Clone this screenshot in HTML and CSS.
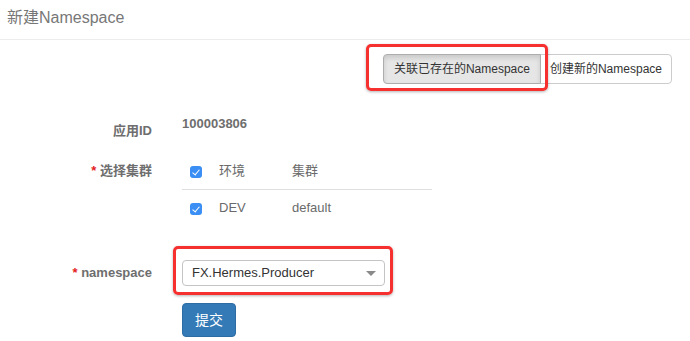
FILE: index.html
```html
<!DOCTYPE html>
<html lang="zh-CN">
<head>
<meta charset="utf-8">
<title>新建Namespace</title>
<link rel="stylesheet" href="styles.css">
</head>
<body>
<header class="page-header">新建Namespace</header>

<div class="toolbar">
  <div class="btn-group">
    <button class="btn btn-active">关联已存在的Namespace</button>
    <button class="btn">创建新的Namespace</button>
  </div>
  <span class="highlight highlight-toolbar"></span>
</div>

<form class="form">
  <div class="form-row row-app">
    <label class="control-label">应用ID</label>
    <div class="field"><p class="static-value">100003806</p></div>
  </div>

  <div class="form-row row-cluster">
    <label class="control-label"><span class="req">*</span> 选择集群</label>
    <div class="field">
      <table class="cluster-table">
        <thead>
          <tr>
            <th class="col-check"><span class="checkbox"></span></th>
            <th class="col-env">环境</th>
            <th class="col-cluster">集群</th>
          </tr>
        </thead>
        <tbody>
          <tr>
            <td class="col-check"><span class="checkbox"></span></td>
            <td class="col-env">DEV</td>
            <td class="col-cluster">default</td>
          </tr>
        </tbody>
      </table>
    </div>
  </div>

  <div class="form-row row-namespace">
    <label class="control-label"><span class="req">*</span> namespace</label>
    <div class="field field-select">
      <div class="select">FX.Hermes.Producer<span class="caret"></span></div>
      <span class="highlight highlight-select"></span>
    </div>
  </div>

  <div class="form-row row-submit">
    <div class="control-label"></div>
    <div class="field"><button type="button" class="btn-primary">提交</button></div>
  </div>
</form>
</body>
</html>
```

FILE: styles.css
```css
* { box-sizing: border-box; }

html, body {
  margin: 0;
  padding: 0;
  background: #fff;
}

body {
  font-family: "Liberation Sans", "Noto Sans CJK SC", sans-serif;
  color: #333;
  width: 690px;
  height: 341px;
  overflow: hidden;
}

.page-header {
  height: 40px;
  line-height: 36px;
  padding-left: 7px;
  font-size: 16px;
  color: #777;
  border-bottom: 1px solid #ececec;
}

.toolbar {
  position: relative;
  display: flex;
  justify-content: flex-end;
  padding-right: 18px;
  margin-top: 14px;
}

.btn-group {
  display: flex;
}

.btn {
  font-family: inherit;
  font-size: 12px;
  line-height: 18px;
  height: 30px;
  padding: 5px 9px;
  color: #333;
  background: #fff;
  border: 1px solid #ccc;
  border-radius: 0 4px 4px 0;
  margin-left: -1px;
}

.btn-active {
  padding: 5px 10px;
  background: #e6e6e6;
  border-color: #adadad;
  border-radius: 4px 0 0 4px;
  box-shadow: inset 0 3px 5px rgba(0, 0, 0, 0.125);
  margin-left: 0;
  position: relative;
  z-index: 1;
}

.highlight {
  position: absolute;
  border: 3px solid #f5302e;
  border-radius: 5px;
  box-shadow: 0 1px 3px rgba(0, 0, 0, 0.3);
  pointer-events: none;
}

.highlight-toolbar {
  left: 366px;
  top: -10px;
  width: 182px;
  height: 47px;
}

.form {
  margin-top: 30px;
}

.form-row {
  display: flex;
}

.control-label {
  width: 152px;
  flex: none;
  text-align: right;
  font-size: 13px;
  font-weight: bold;
  line-height: 20px;
  color: #6e6e6e;
  padding-top: 7px;
}

.req {
  color: #e4211b;
}

.field {
  margin-left: 30px;
}

.static-value {
  margin: 0;
  font-size: 13px;
  font-weight: bold;
  line-height: 20px;
  color: #6e6e6e;
}

.row-cluster {
  margin-top: 12px;
}

.row-cluster .control-label {
  padding-top: 8px;
}

.cluster-table {
  border-collapse: collapse;
  width: 250px;
  font-size: 13px;
  color: #6a6a6a;
}

.cluster-table th,
.cluster-table td {
  text-align: left;
  font-weight: normal;
  line-height: 20px;
  padding: 8px 8px;
  vertical-align: middle;
}

.cluster-table thead th {
  border-bottom: 1px solid #dedede;
  padding-bottom: 8px;
}

.col-check {
  width: 29px;
}

.col-env {
  width: 73px;
}

.checkbox {
  display: block;
  width: 12px;
  height: 12px;
  border-radius: 3px;
  background: #3b8ef3;
  position: relative;
  margin-top: 2px;
}

.checkbox::after {
  content: "";
  position: absolute;
  left: 4px;
  top: 2px;
  width: 3px;
  height: 6px;
  border: solid #fff;
  border-width: 0 1.5px 1.5px 0;
  transform: rotate(40deg);
}

.row-namespace {
  margin-top: 34px;
  align-items: center;
}

.row-namespace .control-label {
  padding-top: 0;
}

.field-select {
  position: relative;
}

.select {
  position: relative;
  width: 203px;
  height: 26px;
  line-height: 24px;
  padding-left: 9px;
  font-size: 13px;
  color: #333;
  background: #fff;
  border: 1px solid #c4c4c4;
  border-radius: 4px;
}

.caret {
  position: absolute;
  right: 8px;
  top: 10px;
  width: 0;
  height: 0;
  border-left: 5px solid transparent;
  border-right: 5px solid transparent;
  border-top: 5px solid #8a8a8a;
}

.highlight-select {
  left: -9px;
  top: -14px;
  width: 220px;
  height: 49px;
}

.row-submit {
  margin-top: 17px;
}

.row-submit .control-label {
  padding-top: 0;
}

.btn-primary {
  font-family: inherit;
  font-size: 14px;
  line-height: 20px;
  height: 34px;
  padding: 6px 12px;
  color: #fff;
  background: #337ab7;
  border: 1px solid #2e6da4;
  border-radius: 4px;
}
```
